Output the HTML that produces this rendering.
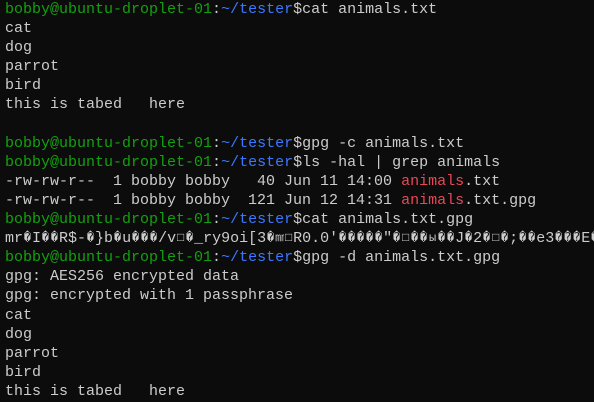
<!DOCTYPE html>
<html><head><meta charset="utf-8"><style>
html,body{margin:0;padding:0;background:#0c0c0c;width:594px;height:402px;overflow:hidden}
pre{margin:0;padding:0 0 0 5px;font-family:"Liberation Mono","DejaVu Sans Mono",monospace;font-size:15px;line-height:19.1px;color:#cccccc;white-space:pre}
.g{color:#13a10e}.b{color:#3b78ff}.r{color:#e74856}
i{font-style:normal;display:inline-block;width:9px;overflow:hidden;vertical-align:top;text-align:center;font-size:12px}
</style></head><body><pre><span class="g">bobby@ubuntu-droplet-01</span>:<span class="b">~/tester</span>$cat animals.txt
cat
dog
parrot
bird
this is tabed   here

<span class="g">bobby@ubuntu-droplet-01</span>:<span class="b">~/tester</span>$gpg -c animals.txt
<span class="g">bobby@ubuntu-droplet-01</span>:<span class="b">~/tester</span>$ls -hal | grep animals
-rw-rw-r--  1 bobby bobby   40 Jun 11 14:00 <span class="r">animals</span>.txt
-rw-rw-r--  1 bobby bobby  121 Jun 12 14:31 <span class="r">animals</span>.txt.gpg
<span class="g">bobby@ubuntu-droplet-01</span>:<span class="b">~/tester</span>$cat animals.txt.gpg
mr<i>�</i>I<i>�</i><i>�</i>R$-<i>�</i>}b<i>�</i>u<i>�</i><i>�</i><i>�</i>/v<i>□</i><i>�</i>_ry9oi[3<i>�</i><i>㎜</i><i>□</i>R0.0'<i>�</i><i>�</i><i>�</i><i>�</i><i>�</i>"<i>�</i><i>□</i><i>�</i><i>�</i><i>ы</i><i>�</i><i>�</i>J<i>�</i>2<i>�</i><i>□</i><i>�</i>;<i>�</i><i>�</i>e3<i>�</i><i>�</i><i>�</i>E<i>�</i>
<span class="g">bobby@ubuntu-droplet-01</span>:<span class="b">~/tester</span>$gpg -d animals.txt.gpg
gpg: AES256 encrypted data
gpg: encrypted with 1 passphrase
cat
dog
parrot
bird
this is tabed   here</pre></body></html>
